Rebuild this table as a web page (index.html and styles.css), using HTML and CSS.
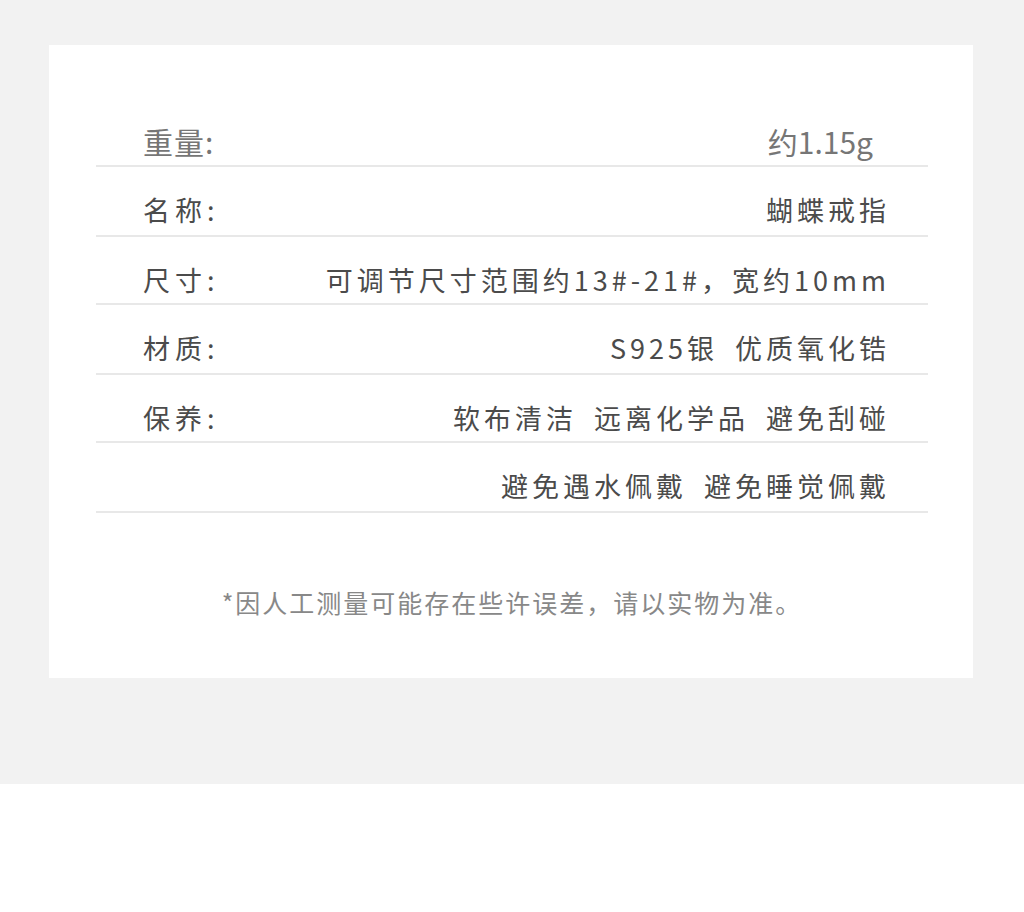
FILE: index.html
```html
<!DOCTYPE html>
<html lang="zh-CN">
<head>
    <meta charset="UTF-8">
    <meta name="viewport" content="width=device-width, initial-scale=1.0">
    <title>蝴蝶戒指 - 产品参数</title>
    <link rel="stylesheet" href="styles.css">
</head>
<body>
    <div class="spec-section">
        <div class="spec-card">
            <div class="spec-row spec-row-first">
                <span class="spec-label">重量:</span>
                <span class="spec-value">约1.15g</span>
            </div>
            <div class="spec-row">
                <span class="spec-label">名称:</span>
                <span class="spec-value">蝴蝶戒指</span>
            </div>
            <div class="spec-row">
                <span class="spec-label">尺寸:</span>
                <span class="spec-value">可调节尺寸范围约13#-21#，宽约10mm</span>
            </div>
            <div class="spec-row">
                <span class="spec-label">材质:</span>
                <span class="spec-value">S925银 优质氧化锆</span>
            </div>
            <div class="spec-row">
                <span class="spec-label">保养:</span>
                <span class="spec-value">软布清洁 远离化学品 避免刮碰</span>
            </div>
            <div class="spec-row">
                <span class="spec-label"></span>
                <span class="spec-value">避免遇水佩戴 避免睡觉佩戴</span>
            </div>

            <p class="spec-note">*因人工测量可能存在些许误差，请以实物为准。</p>
        </div>
    </div>
</body>
</html>
```

FILE: styles.css
```css
body {
    margin: 0;
    background: #fff;
    font-family: "Noto Sans CJK SC", "Noto Sans", sans-serif;
    color: #4b4b4b;
}

.spec-section {
    background: #f2f2f2;
    padding: 45px 51px 106px 49px;
}

.spec-card {
    background: #fff;
    padding: 55px 45px 61px 47px;
}

.spec-row {
    display: flex;
    justify-content: space-between;
    align-items: center;
    padding: 28px 42px 8px 47px;
    border-bottom: 2px solid #e8e8e8;
    font-size: 27px;
    line-height: 30px;
    letter-spacing: 4px;
    word-spacing: 7px;
}

.spec-row:nth-child(even) {
    padding-bottom: 10px;
}

.spec-row-first {
    padding-top: 26px;
    padding-bottom: 9px;
    padding-right: 55px;
    font-size: 30px;
    letter-spacing: 0;
    color: #767676;
}

.spec-label {
    white-space: nowrap;
    letter-spacing: 5px;
}

.spec-row-first .spec-label {
    letter-spacing: 1px;
}

.spec-value {
    white-space: pre;
    margin-right: -4px;
}

.spec-row-first .spec-value {
    margin-right: 0;
}

.spec-note {
    margin: 74px 0 0 0;
    text-align: center;
    font-size: 25px;
    line-height: 30px;
    letter-spacing: 2px;
    color: #888;
}
```
